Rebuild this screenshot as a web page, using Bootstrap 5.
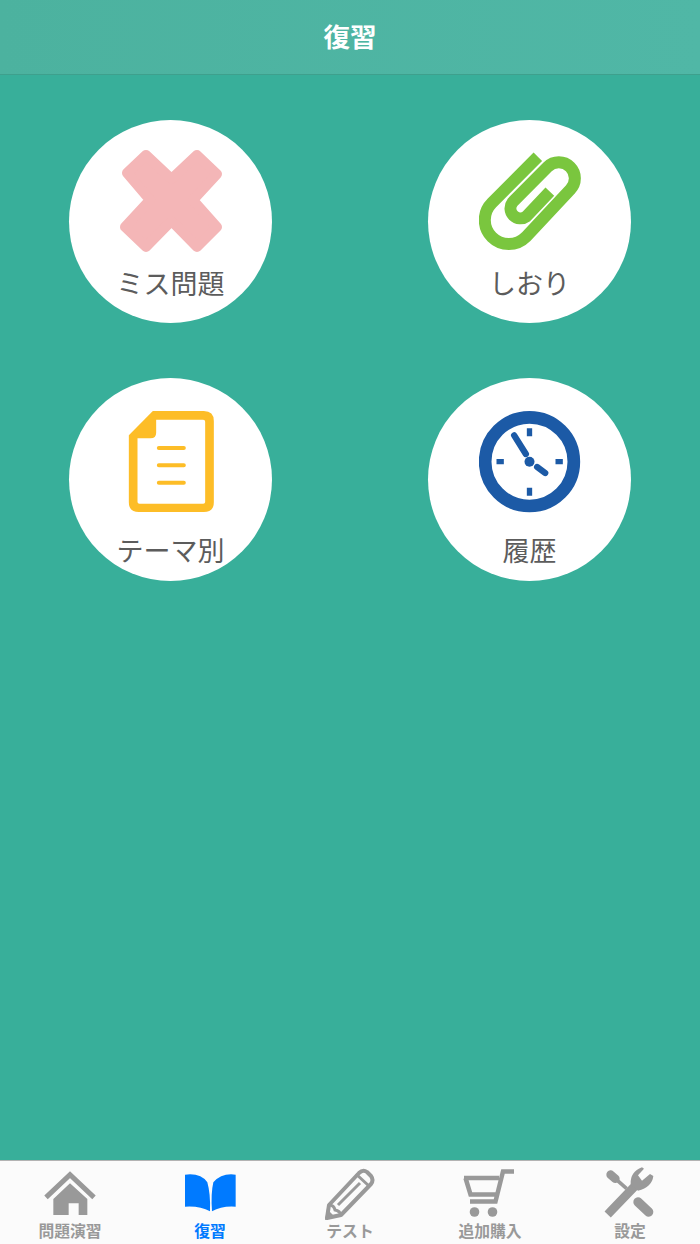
<!DOCTYPE html>
<html lang="ja">
<head>
  <meta charset="UTF-8">
  <meta name="viewport" content="width=device-width,initial-scale=1">
  <title>復習</title>
  <link href="https://cdn.jsdelivr.net/npm/bootstrap@5.3.0/dist/css/bootstrap.min.css" rel="stylesheet">
  <style>
    body {
      font-family: "Liberation Sans", "Noto Sans CJK JP", sans-serif;
      background: #38af9a;
      height: 1244px;
      overflow: hidden;
    }
    /* top bar */
    .app-head {
      height: 75px;
      padding-top: 4px;
      background: linear-gradient(90deg, #4cb29f, #50b7a6);
      border-bottom: 1px solid #3ea08d;
      color: #fff;
      font-size: 26.5px;
      font-weight: 700;
    }
    /* circle menu */
    .menu-grid {
      padding: 45px 69px 0;
      display: grid;
      grid-template-columns: 203px 203px;
      justify-content: space-between;
      row-gap: 55px;
    }
    .menu-circle {
      width: 203px;
      height: 203px;
      padding-top: 30px;
      color: #5c5c5c;
      font-size: 27px;
      line-height: 30px;
    }
    .menu-circle span { margin-top: 18px; }
    .menu-circle.low { padding-top: 33px; }
    .menu-circle.low span { margin-top: 24px; }
    /* tab bar */
    .tab-bar {
      height: 84px;
      background: #fbfbfb;
      border-top: 1px solid #b3b3b3;
    }
    .tab-item {
      width: 140px;
      padding-top: 1px;
      color: #999;
      font-size: 15.8px;
      font-weight: 700;
      line-height: 20px;
    }
    .tab-item.active { color: #007aff; }
  </style>
</head>
<body class="d-flex flex-column">

  <!-- header -->
  <header class="app-head d-flex align-items-center justify-content-center flex-shrink-0">復習</header>

  <!-- menu -->
  <main class="flex-grow-1">
    <div class="menu-grid">
      <div class="menu-circle rounded-circle bg-white d-flex flex-column align-items-center">
        <svg width="102" height="102" viewBox="0 0 102 102">
          <polygon points="26,5 51.5,29 77,5 97,24 73,50 97,77 77,97 51.5,71 26,97 5,77 30,50 7,23" fill="#f4b6b7" stroke="#f4b6b7" stroke-width="10" stroke-linejoin="round"/>
        </svg>
        <span>ミス問題</span>
      </div>
      <div class="menu-circle rounded-circle bg-white d-flex flex-column align-items-center">
        <svg width="102" height="102" viewBox="175.5 120 306 306">
          <path d="M352,140 L214,279 A72,72 0 0 0 316,381 L449,239 A48,48 0 0 0 381,171 L276,277 A30,30 0 0 0 318,319 L388,245" fill="none" stroke="#7ac63e" stroke-width="36"/>
        </svg>
        <span>しおり</span>
      </div>
      <div class="menu-circle low rounded-circle bg-white d-flex flex-column align-items-center">
        <svg width="102" height="102" viewBox="178.5 122 306 306">
          <path fill="#fdbd27" fill-rule="evenodd" d="M277,122 H430 Q460,122 460,152 V396 Q460,425 430,425 H235 Q205,425 205,396 V195 Z M287,148 H428 Q434,148 434,154 V395 Q434,400 428,400 H237 Q231,400 231,395 V204 H270 Q287,204 287,187 Z"/>
          <path d="M295,233 H370 M295,285 H370 M295,337 H370" stroke="#fdbd27" stroke-width="12" stroke-linecap="round"/>
        </svg>
        <span>テーマ別</span>
      </div>
      <div class="menu-circle low rounded-circle bg-white d-flex flex-column align-items-center">
        <svg width="102" height="102" viewBox="175.5 122 306 306">
          <circle cx="327" cy="274" r="133" fill="none" stroke="#1c5aa6" stroke-width="38"/>
          <path d="M319,174 h16 v24 h-16z M319,352 h16 v24 h-16z M228,266 h22 v16 h-22z M405,266 h22 v16 h-22z" fill="#1c5aa6"/>
          <circle cx="327" cy="274" r="15" fill="#1c5aa6"/>
          <path d="M281,195 L316,251" stroke="#1c5aa6" stroke-width="19" stroke-linecap="round"/>
          <path d="M350,290 L374,308" stroke="#1c5aa6" stroke-width="19" stroke-linecap="round"/>
        </svg>
        <span>履歴</span>
      </div>
    </div>
  </main>

  <!-- tabs -->
  <nav class="tab-bar d-flex flex-shrink-0">
    <div class="tab-item d-flex flex-column align-items-center">
      <svg width="60" height="60" viewBox="120 24 180 180">
        <path d="M138,130 L210,62 L282,130" fill="none" stroke="#999" stroke-width="15"/>
        <path d="M160,183 V135 L210,88 L262,135 V183 H236 V148 H206 V183 Z" fill="#999"/>
      </svg>
      <span>問題演習</span>
    </div>
    <div class="tab-item active d-flex flex-column align-items-center">
      <svg width="60" height="60" viewBox="540 24 180 180">
        <path d="M555,62 Q602,56 622,85 Q632,120 630,172 Q600,155 555,158 Z" fill="#007aff"/>
        <path d="M707,62 Q665,56 640,85 Q632,120 636,172 Q665,155 707,158 Z" fill="#007aff"/>
      </svg>
      <span>復習</span>
    </div>
    <div class="tab-item d-flex flex-column align-items-center">
      <svg width="60" height="60" viewBox="0 0 60 60">
        <path d="M7,56 L9,43 L39,11 Q43,7 47,10 L51,14 Q54,18 51,22 L21,53 Z" fill="none" stroke="#999" stroke-width="4" stroke-linejoin="round"/>
        <path d="M18,43 L40,21 M36,12 L49,24 M9,43 Q14,43 15,48 Q20,49 21,53" fill="none" stroke="#999" stroke-width="3"/>
        <path d="M5,58 L7,47 L15,55 Z" fill="#999"/>
      </svg>
      <span>テスト</span>
    </div>
    <div class="tab-item d-flex flex-column align-items-center">
      <svg width="60" height="60" viewBox="0 0 60 60">
        <path d="M54,9.5 H43 L35.5,39.5 H10 M4,16 H39 M5.5,16 L10.5,32.5 H37" fill="none" stroke="#999" stroke-width="4.5"/>
        <circle cx="14.5" cy="50" r="4.8" fill="#999"/>
        <circle cx="32.5" cy="50" r="4.8" fill="#999"/>
      </svg>
      <span>追加購入</span>
    </div>
    <div class="tab-item d-flex flex-column align-items-center">
      <svg width="60" height="60" viewBox="0 0 180 180">
        <path d="M32,38 L46,50" stroke="#999" stroke-width="26" stroke-linecap="round"/>
        <path d="M46,50 L80,80" stroke="#999" stroke-width="11"/>
        <path d="M114,120 L146,150" stroke="#999" stroke-width="28" stroke-linecap="round"/>
        <path d="M32,148 L105,72" stroke="#999" stroke-width="26" stroke-linecap="square"/>
        <path d="M92,66 Q90,30 126,16 L132,20 L114,40 L126,56 L150,36 L160,42 Q156,76 114,86 Z" fill="#999"/>
      </svg>
      <span>設定</span>
    </div>
  </nav>

  <script src="https://cdn.jsdelivr.net/npm/bootstrap@5.3.0/dist/js/bootstrap.bundle.min.js"></script>
</body>
</html>
